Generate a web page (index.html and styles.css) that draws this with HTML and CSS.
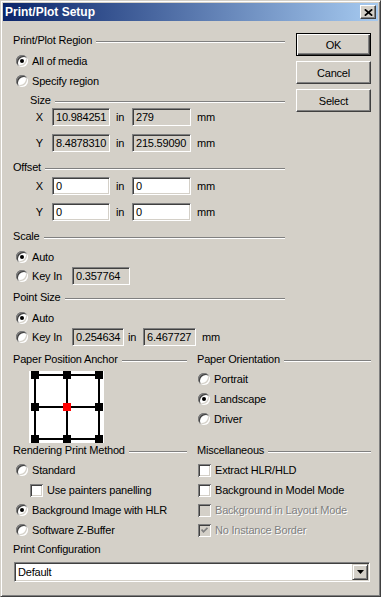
FILE: index.html
```html
<!DOCTYPE html>
<html>
<head>
<meta charset="utf-8">
<title>Print/Plot Setup</title>
<link rel="stylesheet" href="styles.css">
</head>
<body>
<div class="window">
  <div class="titlebar">
    <span class="title">Print/Plot Setup</span>
    <span class="close-btn"><svg width="9" height="7" viewBox="0 0 9 7"><path d="M0.8 0.3 L8.2 6.7 M8.2 0.3 L0.8 6.7" stroke="#000" stroke-width="1.7"/></svg></span>
  </div>
  <div class="content">
    <div class="top">
      <div class="main">
        <div class="glabel"><span>Print/Plot Region</span><i class="rule"></i></div>
        <div class="opt gap4"><span class="radio on"></span>All of media</div>
        <div class="opt"><span class="radio"></span>Specify region</div>

        <div class="glabel sub gap2"><span>Size</span><i class="rule"></i></div>
        <div class="frow gap1"><span class="axis">X</span><span class="edit ro">10.984251</span><span class="unit">in</span><span class="edit ro w59">279</span><span class="mm">mm</span></div>
        <div class="frow gap8"><span class="axis">Y</span><span class="edit ro">8.4878310</span><span class="unit">in</span><span class="edit ro w59">215.59090</span><span class="mm">mm</span></div>

        <div class="glabel gap8"><span>Offset</span><i class="rule"></i></div>
        <div class="frow gap3"><span class="axis">X</span><span class="edit">0</span><span class="unit">in</span><span class="edit w59">0</span><span class="mm">mm</span></div>
        <div class="frow gap8"><span class="axis">Y</span><span class="edit">0</span><span class="unit">in</span><span class="edit w59">0</span><span class="mm">mm</span></div>

        <div class="glabel gap8"><span>Scale</span><i class="rule"></i></div>
        <div class="opt gap4"><span class="radio on"></span>Auto</div>
        <div class="opt short"><span class="radio"></span><span class="keyin">Key In</span><span class="edit ro">0.357764</span></div>

        <div class="glabel gap5"><span>Point Size</span><i class="rule"></i></div>
        <div class="opt gap4"><span class="radio on"></span>Auto</div>
        <div class="opt short"><span class="radio"></span><span class="keyin">Key In</span><span class="edit ro w52">0.254634</span><span class="unit narrow">in</span><span class="edit ro w53">6.467727</span><span class="mm">mm</span></div>
      </div>
      <div class="buttons">
        <div class="btn default">OK</div>
        <div class="btn">Cancel</div>
        <div class="btn">Select</div>
      </div>
    </div>

    <div class="bottom">
      <div class="col">
        <div class="glabel"><span>Paper Position Anchor</span><i class="rule"></i></div>
        <svg class="anchor" width="75" height="72" viewBox="0 0 75 72">
          <rect x="0" y="0" width="75" height="72" fill="#fff"/>
          <g stroke="#000" stroke-width="2">
            <path d="M6 4 H70 M6 36 H70 M6 68 H70 M6 4 V68 M38 4 V68 M70 4 V68"/>
          </g>
          <g fill="#000">
            <rect x="2" y="0" width="8" height="8"/>
            <rect x="34" y="0" width="8" height="8"/>
            <rect x="66" y="0" width="8" height="8"/>
            <rect x="2" y="32" width="8" height="8"/>
            <rect x="66" y="32" width="8" height="8"/>
            <rect x="2" y="64" width="8" height="8"/>
            <rect x="34" y="64" width="8" height="8"/>
            <rect x="66" y="64" width="8" height="8"/>
          </g>
          <rect x="34" y="32" width="8" height="8" fill="#f00"/>
        </svg>
      </div>
      <div class="col right">
        <div class="glabel"><span>Paper Orientation</span><i class="rule"></i></div>
        <div class="opts">
          <div class="opt"><span class="radio"></span>Portrait</div>
          <div class="opt"><span class="radio on"></span>Landscape</div>
          <div class="opt"><span class="radio"></span>Driver</div>
        </div>
      </div>
      <div class="col">
        <div class="glabel"><span>Rendering Print Method</span><i class="rule"></i></div>
        <div class="opts">
          <div class="opt"><span class="radio"></span>Standard</div>
          <div class="opt"><span class="check indent"></span>Use painters panelling</div>
          <div class="opt"><span class="radio on"></span>Background Image with HLR</div>
          <div class="opt"><span class="radio"></span>Software Z-Buffer</div>
        </div>
      </div>
      <div class="col right">
        <div class="glabel"><span>Miscellaneous</span><i class="rule"></i></div>
        <div class="opts">
          <div class="opt"><span class="check"></span>Extract HLR/HLD</div>
          <div class="opt"><span class="check"></span>Background in Model Mode</div>
          <div class="opt disabled"><span class="check off"></span>Background in Layout Mode</div>
          <div class="opt disabled"><span class="check off"><svg width="7" height="7" viewBox="0 0 7 7"><path d="M0.5 2.5 L2.5 4.8 L6.5 0.8" fill="none" stroke="#808080" stroke-width="1.8"/></svg></span>No Instance Border</div>
        </div>
      </div>
    </div>

    <div class="cfg-label">Print Configuration</div>
    <div class="combo">
      <span class="combo-text">Default</span>
      <span class="drop"><svg width="7" height="4" viewBox="0 0 7 4"><path d="M0 0 H7 L3.5 4 Z" fill="#000"/></svg></span>
    </div>
  </div>
</div>
</body>
</html>
```
FILE: styles.css
```css
html, body {
  margin: 0;
  padding: 0;
  background: #d4d0c8;
}
body {
  font-family: "Liberation Sans", Arial, sans-serif;
  font-size: 11px;
  letter-spacing: -0.2px;
  color: #000;
}
.window {
  width: 381px;
  height: 597px;
  box-sizing: border-box;
  border: 1px solid;
  border-color: #d4d0c8 #404040 #404040 #d4d0c8;
  box-shadow: inset 1px 1px 0 #fff, inset -1px -1px 0 #808080;
  padding: 2px;
  background: #d4d0c8;
}
.titlebar {
  height: 18px;
  display: flex;
  align-items: center;
  justify-content: space-between;
  padding: 0 2px;
  background: linear-gradient(to right, #0a246a, #a6caf0);
  color: #fff;
}
.title {
  font-weight: bold;
  font-size: 12px;
  letter-spacing: 0;
}
.close-btn {
  width: 16px;
  height: 14px;
  box-sizing: border-box;
  background: #d4d0c8;
  border: 1px solid;
  border-color: #fff #404040 #404040 #fff;
  box-shadow: inset -1px -1px 0 #808080;
  display: flex;
  align-items: center;
  justify-content: center;
}
.close-btn svg { display: block; }
.content {
  padding: 12px 7px 0 10px;
}
.top {
  display: flex;
  gap: 11px;
}
.main {
  width: 272px;
}
.buttons {
  width: 75px;
  display: flex;
  flex-direction: column;
  gap: 5px;
}
.btn {
  height: 23px;
  box-sizing: border-box;
  border: 1px solid;
  border-color: #fff #404040 #404040 #fff;
  box-shadow: inset -1px -1px 0 #808080;
  display: flex;
  align-items: center;
  justify-content: center;
}
.btn.default {
  border-color: #000;
  box-shadow: inset 1px 1px 0 #fff, inset -1px -1px 0 #404040, inset -2px -2px 0 #808080;
}
.glabel {
  display: flex;
  align-items: center;
  height: 14px;
  white-space: nowrap;
}
.glabel.sub {
  padding-left: 17px;
}
.rule {
  flex: 1;
  height: 0;
  border-top: 1px solid #808080;
  border-bottom: 1px solid #fff;
  margin: 4px 0 0 4px;
}
.gap1 { margin-top: 1px; }
.gap2 { margin-top: 2px; }
.gap3 { margin-top: 3px; }
.gap4 { margin-top: 4px; }
.gap5 { margin-top: 5px; }
.gap8 { margin-top: 8px; }
.opt {
  display: flex;
  align-items: center;
  height: 20px;
  white-space: nowrap;
}
.opt.short {
  height: 18px;
}
.opt.disabled {
  color: #808080;
  text-shadow: 1px 1px 0 #fff;
}
.radio {
  position: relative;
  flex: none;
  width: 12px;
  height: 12px;
  border-radius: 50%;
  background: #fff;
  margin: 0 4px 0 3px;
  box-shadow: inset 1px 1px 0 #808080, inset -1px -1px 0 #fff, inset 2px 2px 0 #404040, inset -2px -2px 0 #d4d0c8;
}
.radio.on::after {
  content: "";
  position: absolute;
  left: 4px;
  top: 4px;
  width: 4px;
  height: 4px;
  border-radius: 50%;
  background: #000;
}
.check {
  flex: none;
  width: 13px;
  height: 13px;
  box-sizing: border-box;
  background: #fff;
  margin: 0 4px 0 3px;
  box-shadow: inset 1px 1px 0 #808080, inset -1px -1px 0 #fff, inset 2px 2px 0 #404040, inset -2px -2px 0 #d4d0c8;
  display: flex;
  align-items: center;
  justify-content: center;
}
.check.indent {
  margin-left: 17px;
}
.check.off {
  background: #d4d0c8;
}
.check svg { display: block; }
.right .radio,
.right .check {
  margin-left: 1px;
}
.frow {
  display: flex;
  align-items: center;
  height: 18px;
}
.axis {
  width: 39px;
  box-sizing: border-box;
  text-align: right;
  padding-right: 9px;
}
.edit {
  flex: none;
  box-sizing: border-box;
  height: 18px;
  width: 58px;
  border: 1px solid;
  border-color: #808080 #fff #fff #808080;
  box-shadow: inset 1px 1px 0 #404040, inset -1px -1px 0 #d4d0c8;
  background: #fff;
  padding-left: 3px;
  display: flex;
  align-items: center;
}
.edit.ro { background: #d4d0c8; }
.edit.w59 { width: 59px; }
.edit.w52 { width: 52px; }
.edit.w53 { width: 53px; }
.unit {
  width: 22px;
  box-sizing: border-box;
  padding-left: 6px;
}
.unit.narrow {
  width: 19px;
  padding-left: 4px;
}
.mm {
  margin-left: 6px;
}
.keyin {
  width: 40px;
}
.bottom {
  display: grid;
  grid-template-columns: 174px 174px;
  column-gap: 10px;
  margin-top: 6px;
}
.anchor {
  display: block;
  margin: 5px 0 0 16px;
}
.opts {
  margin-top: 3px;
}
.cfg-label {
  margin-top: 2px;
  height: 14px;
  line-height: 14px;
}
.combo {
  margin: 6px 0 0 1px;
  width: 356px;
  height: 20px;
  box-sizing: border-box;
  border: 1px solid;
  border-color: #808080 #fff #fff #808080;
  box-shadow: inset 1px 1px 0 #404040, inset -1px -1px 0 #d4d0c8;
  background: #fff;
  display: flex;
  align-items: center;
  justify-content: space-between;
  padding: 1px;
}
.combo-text {
  padding-left: 2px;
}
.drop {
  width: 16px;
  height: 16px;
  box-sizing: border-box;
  background: #d4d0c8;
  border: 1px solid;
  border-color: #d4d0c8 #404040 #404040 #d4d0c8;
  box-shadow: inset 1px 1px 0 #fff, inset -1px -1px 0 #808080;
  display: flex;
  align-items: center;
  justify-content: center;
}
.drop svg { display: block; }
```
